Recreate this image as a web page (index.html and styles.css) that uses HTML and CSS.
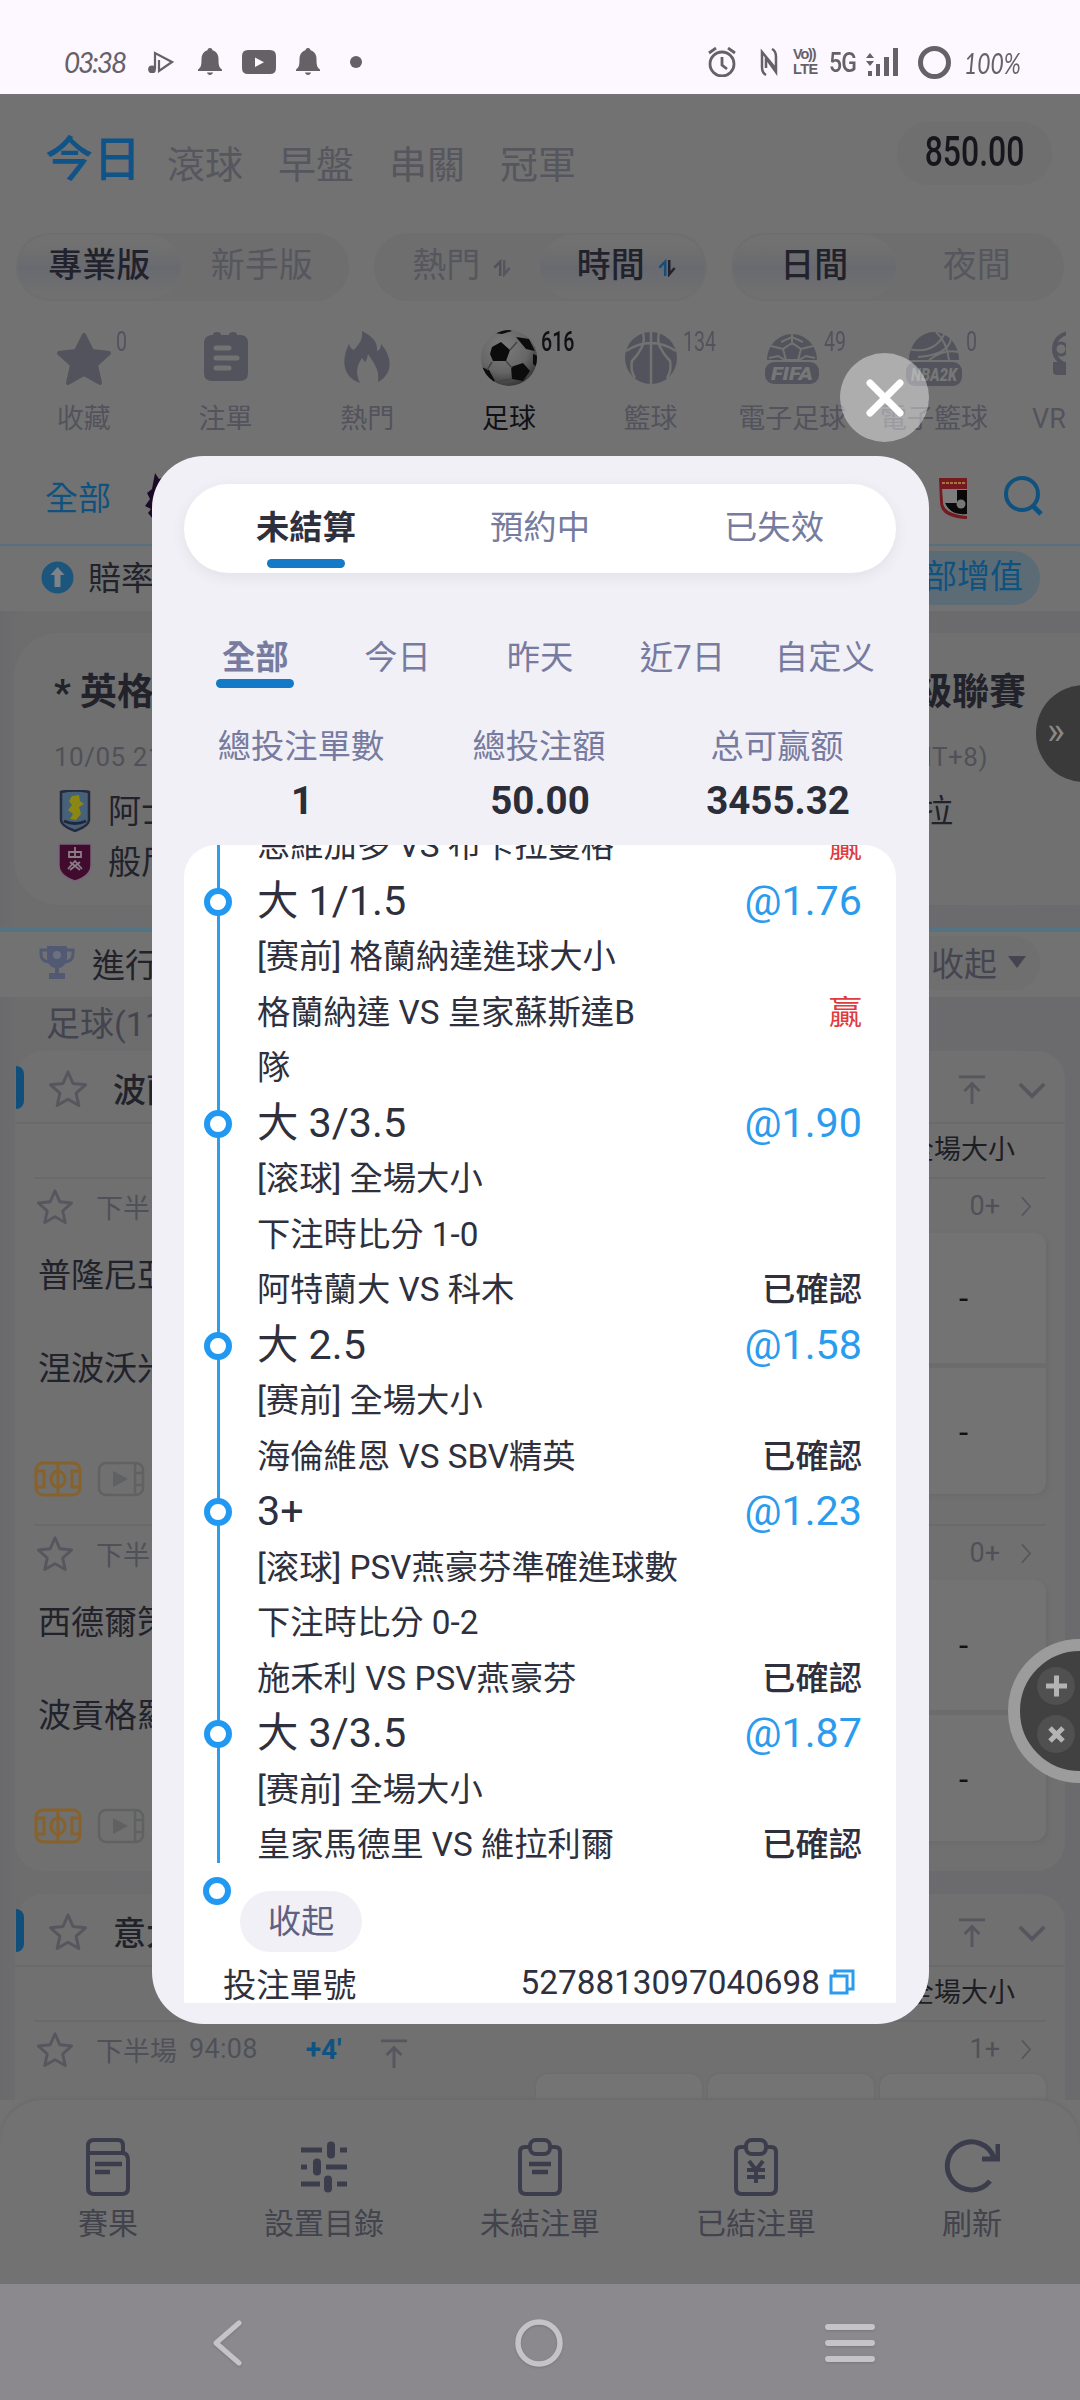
FILE: index.html
```html
<!DOCTYPE html>
<html lang="zh-Hant">
<head>
<meta charset="utf-8">
<title>未結注單</title>
<link rel="stylesheet" href="styles.css">
</head>
<body>
<svg class="defs" width="0" height="0" aria-hidden="true">
  <symbol id="bell" viewBox="0 0 24 28"><path d="M12 0c1.7 0 2.4 1 2.5 2.3C18.500 3.500 20.500 7 20.500 11c0 6 .5 8.500 3.500 10.500V23H0v-1.500C3 19.500 3.500 17 3.500 11c0-4 2-7.500 6-8.700C9.600 1 10.300 0 12 0zM9 24.500h6c-.5 3.300-5.500 3.300-6 0z" fill="currentColor"/></symbol>
  <symbol id="star" viewBox="0 0 44 40"><path d="M22 4l5 11.500 12.500 1.300-9.400 8.400 2.700 12.300L22 31.200l-10.800 6.300 2.700-12.300-9.400-8.400L17 15.500z" fill="none" stroke="currentColor" stroke-width="3" stroke-linejoin="round"/></symbol>
  <symbol id="totop" viewBox="0 0 30 34"><path d="M1 3h28M15 32V10M7 18l8-8 8 8" fill="none" stroke="currentColor" stroke-width="3"/></symbol>
  <symbol id="chev" viewBox="0 0 30 18"><path d="M2 2l13 13L28 2" fill="none" stroke="currentColor" stroke-width="4"/></symbol>
  <symbol id="more" viewBox="0 0 12 22"><path d="M1 1l9 10-9 10" fill="none" stroke="currentColor" stroke-width="1.800"/></symbol>
  <symbol id="sort" viewBox="0 0 20 20"><path d="M1.500 9.500L8 3v16" fill="none" stroke="var(--up)" stroke-width="2.800"/><path d="M12.500 1v16l6-7" fill="none" stroke="currentColor" stroke-width="2.800"/></symbol>
  <symbol id="pitch" viewBox="0 0 48 36"><g fill="none" stroke="currentColor" stroke-width="3"><rect x="2" y="2" width="44" height="32" rx="7"/><path d="M24 2v32M2 10h8v16H2M46 10h-8v16h8"/><ellipse cx="24" cy="18" rx="7" ry="8"/></g></symbol>
  <symbol id="video" viewBox="0 0 48 36"><g fill="none" stroke="currentColor" stroke-width="2.500"><rect x="2" y="2" width="44" height="32" rx="7"/><path d="M38 3v30M38 12h7M38 24h7"/></g><path d="M16 10l15 8-15 8z" fill="currentColor"/></symbol>
  <symbol id="clip" viewBox="0 0 46 58"><g fill="none" stroke="currentColor" stroke-width="4"><path d="M12 9H8q-5 0-5 5v36q0 6 6 6h28q6 0 6-6V14q0-5-5-5h-4"/><rect x="13" y="2" width="20" height="14" rx="6"/></g></symbol>
</svg>

<div class="phone">
  <header class="status">
    <span class="hand clock">03:38</span>
    <svg width="26" height="22" viewBox="0 0 26 22" fill="none" stroke="currentColor" stroke-width="2.200"><path d="M7 18V2l17 9-13 9V9"/><circle cx="4" cy="18.500" r="2.800" fill="currentColor"/></svg>
    <svg width="24" height="28"><use href="#bell"/></svg>
    <svg width="34" height="24" viewBox="0 0 34 24"><path d="M6 0h22q6 0 6 6v12q0 6-6 6H6q-6 0-6-6V6q0-6 6-6zM13 7.500v9.500l9-4.700z" fill="currentColor" fill-rule="evenodd"/></svg>
    <svg width="24" height="28"><use href="#bell"/></svg>
    <i class="dot"></i>
    <svg class="alarm" width="28" height="30" viewBox="0 0 28 30" fill="none" stroke="currentColor" stroke-width="2.800"><circle cx="14" cy="17" r="12"/><path d="M14 10v8l5 4M1 6l7-5M27 6l-7-5"/></svg>
    <svg class="nfc" width="18" height="28" viewBox="0 0 18 28" fill="none" stroke="currentColor" stroke-width="2.500"><path d="M6 27q-4-2-4-8V4l14 17M12 1q4 2 4 8v15L6 10v10"/></svg>
    <span class="volte"><b>Vo))</b><b class="lte">LTE</b></span>
    <span class="net">5G</span>
    <svg class="signal" width="32" height="28" viewBox="0 0 32 28" fill="currentColor"><path d="M0 10l4-5 4 5zM0 13h8l-4 5zM2 23h4v5H2zM10 16h4v12h-4zM18 9h5v19h-5zM27 0h5v28h-5z"/></svg>
    <i class="ring"></i>
    <span class="hand pct">100%</span>
  </header>

  <main class="app">
    <nav class="top">
      <b>今日</b><span>滾球</span><span>早盤</span><span>串關</span><span>冠軍</span>
      <div class="balance"><em>850.00</em></div>
    </nav>
    <div class="segs">
      <div class="seg"><span class="on">專業版</span><span>新手版</span></div>
      <div class="seg sorts"><span>熱門<svg width="18" height="18"><use href="#sort"/></svg></span><span class="on">時間<svg class="blue-up" width="18" height="18"><use href="#sort"/></svg></span></div>
      <div class="seg"><span class="on">日間</span><span>夜間</span></div>
    </div>
    <div class="sports">
      <div class="sport"><svg width="56" height="60" viewBox="0 0 56 60"><path d="M28 6l8 16 17 2-13 12 4 18-16-9-16 9 4-18L3 24l17-2z" fill="currentColor" stroke="currentColor" stroke-width="4" stroke-linejoin="round"/></svg><sup>0</sup><span>收藏</span></div>
      <div class="sport"><svg width="56" height="60" viewBox="0 0 56 60"><path d="M13 6h2q0-3 4-3t4 3h8q0-3 4-3t4 3h3q8 0 8 8v30q0 8-8 8H14q-8 0-8-8V14q0-7 7-8z" fill="currentColor"/><path d="M18 19h13M18 29h21M18 39h13" stroke="#727272" stroke-width="5" stroke-linecap="round"/></svg><span>注單</span></div>
      <div class="sport"><svg width="56" height="60" viewBox="0 0 56 60"><path d="M23 2c10 5 16 11 15 20 3-1 4-4 4-7 10 11 14 29-3 38 2-13-5-20-10-28-1 4-1 6-3 8l-3-4c-5 7-7 15-2 25C2 47 3 29 10 15c1 3 2 5 5 6 5-6 9-10 8-19z" fill="currentColor"/></svg><span>熱門</span></div>
      <div class="sport active"><svg width="58" height="60" viewBox="0 0 58 60"><defs><radialGradient id="ball" cx=".4" cy=".3" r=".75"><stop offset="0" stop-color="#7c7c7c"/><stop offset=".6" stop-color="#666"/><stop offset="1" stop-color="#333"/></radialGradient><clipPath id="bc"><circle cx="29" cy="29" r="28"/></clipPath></defs><circle cx="29" cy="29" r="28" fill="url(#ball)"/><g clip-path="url(#bc)"><path d="M12 18l9-5 9 8-4 11H13l-3-7zM36 8l13 2 6 12-9-2zM31 38l12-4 7 8-7 10-11-2zM1 38l8 3 6 11-6 4zM14 4l14-4 4 2-10 3zM53 25l5 2v12l-5-4z" fill="#0c0c0c"/><path d="M30 21l7-8M26 32l6 7M12 33l-5 8M32 50l-16 3" stroke="#444" stroke-width="1.500"/></g></svg><sup>616</sup><span>足球</span></div>
      <div class="sport"><svg width="56" height="60" viewBox="0 0 56 60"><circle cx="28" cy="29" r="26" fill="currentColor"/><path d="M28 3v52M3 22q25-16 50 0M20 4q2 7-1 14-4 8-10 14-2 9 3 17M36 4q-2 7 1 14 4 8 10 14 2 9-3 17" fill="none" stroke="#727272" stroke-width="2.500"/></svg><sup>134</sup><span>籃球</span></div>
      <div class="sport"><svg width="56" height="60" viewBox="0 0 56 60"><path d="M3 31a25 26 0 0150 0z" fill="currentColor"/><path d="M17 13l11-5 11 5M28 14l-9 6 3 11h12l3-11zM19 20L7 17M37 20l12-3M21 31l-7-4-9 2M35 31l7-4 9 2M28 3v11" fill="none" stroke="#727272" stroke-width="2"/><rect x="1" y="33" width="54" height="22" rx="9" fill="currentColor"/><text x="28" y="51" class="badge" textLength="42" lengthAdjust="spacingAndGlyphs">FIFA</text></svg><sup>49</sup><span>電子足球</span></div>
      <div class="sport"><svg width="56" height="60" viewBox="0 0 56 60"><path d="M3 31a25 28 0 0150 0z" fill="currentColor"/><path d="M3 20q25 6 36-16M12 28q30-2 33-18M30 3q11 10 13 28M23 31q15-11 29-8" fill="none" stroke="#727272" stroke-width="2"/><rect x="0" y="33" width="56" height="24" rx="9" fill="currentColor"/><text x="28" y="52" class="badge" textLength="46" lengthAdjust="spacingAndGlyphs">NBA2K</text></svg><sup>0</sup><span>電子籃球</span></div>
      <div class="sport vr"><svg width="14" height="60" viewBox="0 0 14 60"><circle cx="18" cy="20" r="16" fill="none" stroke="currentColor" stroke-width="4"/><circle cx="9" cy="20" r="6" fill="none" stroke="currentColor" stroke-width="3"/><path d="M1 33h13v13H5q-4 0-4-4z" fill="currentColor"/></svg><span>VR</span></div>
    </div>
    <div class="leagues">
      <span>全部</span>
      <svg class="lion" width="34" height="46" viewBox="0 0 34 46"><path d="M10 0l4 6 8-3 12 10v33H8l-5-6 3-4-6-3 5-7-3-6 5-4z" fill="#1d0a26"/></svg>
      <svg class="jl" width="28" height="42" viewBox="0 0 28 42"><path d="M0 0h28v41Q1 40 1 24z" fill="#741a20"/><path d="M3 11h25v27Q4 36 4 24z" fill="#7d7d7d"/><path d="M18 12h10v24Q12 38 6 25h12z" fill="#090909"/><circle cx="22" cy="26" r="4.500" fill="#777"/><path d="M3 5h24" stroke="#a5793c" stroke-width="2" stroke-dasharray="3 1"/></svg>
      <svg class="search" width="40" height="40" viewBox="0 0 40 40"><circle cx="18" cy="18" r="16" fill="none" stroke="#0f527f" stroke-width="4"/><path d="M28 29l9 9" stroke="#0f527f" stroke-width="5"/></svg>
    </div>
    <div class="boost">
      <svg width="33" height="33" viewBox="0 0 33 33"><circle cx="16.500" cy="16.500" r="16" fill="#1c567c"/><path d="M16.500 6l7 8h-4v12h-6V14h-4z" fill="#7d8386"/></svg>
      <span>賠率</span><div class="boost-btn">全部增值</div>
    </div>

    <div class="grey">
      <section class="feature">
        <div class="feature-title"><b>* 英格</b><b>級聯賽</b></div>
        <div class="feature-date"><span>10/05 21</span><span>(GMT+8)</span></div>
        <div class="feature-team"><svg width="34" height="42" viewBox="0 0 34 42"><path d="M3 2q14-3 28 0v28q0 6-14 11Q3 36 3 30z" fill="#476178" stroke="#252b3c" stroke-width="2.500"/><path d="M14 6l7-1 1 6 4 3-5 3 2 7-5 6-6-1 3-5-5-4 4-5-3-4z" fill="#8b8710"/><path d="M6 31q11 5 22 0" stroke="#20283d" stroke-width="3" fill="none"/></svg><span>阿士</span><span class="end">拉</span></div>
        <div class="feature-team"><svg width="34" height="40" viewBox="0 0 34 40"><path d="M1 2h32v21q0 11-16 16Q1 34 1 23z" fill="#400b2c" stroke="#79637a" stroke-width="1.500"/><path d="M11 10h12v5H11zM17 5v10M10 27l7-8 7 8M12 20l10 8M22 20l-10 8" fill="none" stroke="#887f86" stroke-width="1.800"/></svg><span>般尼</span></div>
      </section>
    </div>
    <div class="live">
      <svg width="36" height="36" viewBox="0 0 36 36"><path d="M8 1h20v11q0 9-8 11v5h6v6H10v-6h6v-5q-8-2-8-11z" fill="#525973"/><path d="M8 5H2v4q0 7 8 8M28 5h6v4q0 7-8 8" fill="none" stroke="#525973" stroke-width="3"/><circle cx="18" cy="10" r="4" fill="#6c7180"/></svg>
      <span>進行</span><div class="fold">收起<i></i></div>
    </div>
    <div class="grey matches">
      <h2>足球(11</h2>
      <section class="card">
        <div class="card-head"><i class="tab"></i><svg width="44" height="40"><use href="#star"/></svg><b>波蘭</b><svg class="push" width="28" height="32"><use href="#totop"/></svg><svg class="down" width="28" height="17"><use href="#chev"/></svg></div>
        <div class="cols">全場大小</div>
        <article class="match">
          <div class="match-head"><svg width="42" height="38"><use href="#star"/></svg><span>下半</span><em>0+</em><svg class="more" width="11" height="21"><use href="#more"/></svg></div>
          <div class="match-body"><div class="teams"><span>普隆尼亞</span><span>涅波沃米</span><div class="media"><svg class="gold" width="48" height="36"><use href="#pitch"/></svg><svg width="48" height="36"><use href="#video"/></svg></div></div><div class="odds"><div>-</div><div>-</div></div></div>
        </article>
        <article class="match">
          <div class="match-head"><svg width="42" height="38"><use href="#star"/></svg><span>下半</span><em>0+</em><svg class="more" width="11" height="21"><use href="#more"/></svg></div>
          <div class="match-body"><div class="teams"><span>西德爾策</span><span>波貢格羅</span><div class="media"><svg class="gold" width="48" height="36"><use href="#pitch"/></svg><svg width="48" height="36"><use href="#video"/></svg></div></div><div class="odds"><div>-</div><div>-</div></div></div>
        </article>
      </section>
      <section class="card second">
        <div class="card-head"><i class="tab"></i><svg width="44" height="40"><use href="#star"/></svg><b>意大</b><svg class="push" width="28" height="32"><use href="#totop"/></svg><svg class="down" width="28" height="17"><use href="#chev"/></svg></div>
        <div class="cols">全場大小</div>
        <article class="match">
          <div class="match-head"><svg width="42" height="38"><use href="#star"/></svg><span>下半場</span><span class="time">94:08</span><strong>+4'</strong><svg class="top-in" width="28" height="32"><use href="#totop"/></svg><em>1+</em><svg class="more" width="11" height="21"><use href="#more"/></svg></div>
          <div class="cells"><i></i><i></i><i></i></div>
        </article>
      </section>
    </div>
  </main>

  <footer class="dock">
    <div><svg width="46" height="58" viewBox="0 0 46 58" fill="none" stroke="currentColor" stroke-width="4"><path d="M3 15V8q0-6 6-6h24q5 0 5 6v7M3 15h34q6 0 6 7v28q0 6-6 6H9q-6 0-6-6z"/><path d="M10 26h27M10 34h15" stroke-width="4.500"/></svg><span>賽果</span></div>
    <div><svg width="46" height="58" viewBox="0 0 46 58" fill="none" stroke="currentColor" stroke-width="5"><path d="M0 12h21M39 12h7M0 29h6M25 29h21M0 46h19M36 46h10"/><path d="M30 7.500v9M16 24.500v9M27 41.500v9" stroke-width="8" stroke-linecap="round"/></svg><span>設置目錄</span></div>
    <div><svg width="46" height="58" viewBox="0 0 46 58"><use href="#clip" width="46" height="58"/><path d="M12 26h22M15 34h16" stroke="currentColor" stroke-width="4.500"/></svg><span>未結注單</span></div>
    <div><svg width="46" height="58" viewBox="0 0 46 58"><use href="#clip" width="46" height="58"/><path d="M16 23l7 9 7-9M14 32h18M14 39h18M23 31v14" fill="none" stroke="currentColor" stroke-width="4"/></svg><span>已結注單</span></div>
    <div><svg width="56" height="58" viewBox="0 0 56 58" fill="none" stroke="currentColor" stroke-width="5"><path d="M46 43A24 24 0 1 1 50 20M54 6v15H38"/></svg><span>刷新</span></div>
  </footer>

  <footer class="sysnav">
    <svg width="32" height="46" viewBox="0 0 32 46" fill="none" stroke="currentColor" stroke-width="5" stroke-linecap="round" stroke-linejoin="round"><path d="M28 3L5 23l23 20"/></svg>
    <svg class="home" width="48" height="48" viewBox="0 0 48 48" fill="none" stroke="currentColor" stroke-width="5.500"><circle cx="24" cy="24" r="21"/></svg>
    <svg width="50" height="38" viewBox="0 0 50 38" stroke="currentColor" stroke-width="6" stroke-linecap="round"><path d="M3 3h44M3 19h44M3 35h44"/></svg>
  </footer>

  <div class="handle">»</div>
  <svg class="fab" width="73" height="146" viewBox="0 0 73 146"><circle cx="73" cy="73" r="66" fill="#414141" stroke="#9c9c9c" stroke-width="12"/><circle cx="49" cy="48" r="19" fill="#505050"/><circle cx="49" cy="96" r="19" fill="#505050"/><path d="M39 48h21M49.500 37.500v21M43 90l13 13M56 90l-13 13" stroke="#b3b3b3" stroke-width="5"/></svg>

  <button class="close"><svg width="40" height="40" viewBox="0 0 40 40"><path d="M5 5l30 30M35 5L5 35" stroke="#fff" stroke-width="7" stroke-linecap="round"/></svg></button>
  <section class="dialog">
    <nav class="tabs"><span class="on">未結算</span><span>預約中</span><span>已失效</span></nav>
    <nav class="range"><span class="on">全部</span><span>今日</span><span>昨天</span><span>近7日</span><span>自定义</span></nav>
    <dl class="stats">
      <div><dt>總投注單數</dt><dd>1</dd></div><div><dt>總投注額</dt><dd>50.00</dd></div><div><dt>总可赢额</dt><dd>3455.32</dd></div>
    </dl>
    <div class="list">
      <div class="legs">
        <div class="leg first"><div class="row"><span class="vs">恩維加多 VS 布卡拉曼格</span><em class="win">贏</em></div></div>
        <div class="leg"><h3>大 1/1.5<b>@1.76</b></h3><p>[赛前] 格蘭納達進球大小</p><div class="row"><span class="vs">格蘭納達 VS 皇家蘇斯達B隊</span><em class="win">贏</em></div></div>
        <div class="leg"><h3>大 3/3.5<b>@1.90</b></h3><p>[滚球] 全場大小</p><p>下注時比分 1-0</p><div class="row"><span class="vs">阿特蘭大 VS 科木</span><em>已確認</em></div></div>
        <div class="leg"><h3>大 2.5<b>@1.58</b></h3><p>[赛前] 全場大小</p><div class="row"><span class="vs">海倫維恩 VS SBV精英</span><em>已確認</em></div></div>
        <div class="leg"><h3>3+<b>@1.23</b></h3><p>[滚球] PSV燕豪芬準確進球數</p><p>下注時比分 0-2</p><div class="row"><span class="vs">施禾利 VS PSV燕豪芬</span><em>已確認</em></div></div>
        <div class="leg last"><h3>大 3/3.5<b>@1.87</b></h3><p>[赛前] 全場大小</p><div class="row"><span class="vs">皇家馬德里 VS 維拉利爾</span><em>已確認</em></div></div>
      </div>
      <div class="end-row"><i></i><button>收起</button></div>
      <div class="bet-id"><span>投注單號</span><span class="num">5278813097040698</span><svg width="26" height="26" viewBox="0 0 26 26" fill="none" stroke="#2b9bee" stroke-width="3"><path d="M2 7h16v17H2z"/><path d="M6 6V2h18v18h-5" /></svg></div>
    </div>
  </section>
</div>
</body>
</html>
```
FILE: styles.css
```css
*, *::before, *::after { box-sizing: border-box; }
body { margin: 0; font-family: Roboto, "Noto Sans CJK TC", sans-serif; }
.defs { position: absolute; }
svg { display: block; flex: none; }
i, em { font-style: normal; }
button { border: 0; padding: 0; font: inherit; }
h2, h3, p, dl, dd { margin: 0; font-weight: 400; }
.phone { position: relative; width: 1080px; height: 2400px; overflow: hidden; background: #727272; white-space: nowrap; display: flex; flex-direction: column; }

.status { height: 94px; flex: none; background: #fdf7ff; color: #656167; display: flex; align-items: center; padding: 30px 64px 0; }
.hand { font-family: Lato, sans-serif; font-weight: 400; font-style: italic; font-size: 29px; }
.clock { width: 60px; margin-right: 24px; letter-spacing: -2.200px; font-size: 28px; }
.status svg { margin-right: 24px; }
.status svg:nth-of-type(2), .status svg:nth-of-type(3) { margin-right: 20px; }
.status .dot { width: 12px; height: 12px; border-radius: 50%; background: currentColor; margin-left: 6px; }
.status .alarm { margin-left: auto; margin-right: 24px; }
.status .nfc { margin-right: 15px; }
.volte { display: flex; flex-direction: column; gap: 0; font-family: "Liberation Sans", sans-serif; font-size: 14.500px; line-height: 17px; width: 28px; margin-right: 8px; }
.volte b { letter-spacing: -1.200px; }
.volte .lte { letter-spacing: -.6px; margin-top: -2px; }
.net { font-size: 28px; font-weight: 500; letter-spacing: -1px; width: 28px; margin-right: 9px; display: inline-block; transform: scaleX(.82); transform-origin: left; }
.status .signal { margin-right: 20px; }
.ring { width: 33px; height: 33px; border: 5px solid; border-radius: 50%; margin-right: 13px; }
.pct { width: 52px; font-size: 29px; transform: scaleX(.79); transform-origin: left; }

.app { height: 2006px; flex: none; overflow: hidden; color: #22222b; }
.top { height: 139px; display: flex; align-items: center; padding: 0 28px 4px 45px; font-size: 38px; color: #56565f; gap: 36px; }
.top b { font-size: 48px; font-weight: 500; color: #105386; margin-right: -10px; margin-top: -14px; }
.top > span { margin-right: -1px; }
.balance { margin-left: auto; margin-top: -16px; width: 155px; height: 63px; border-radius: 32px; background: #6f6f6f; color: #16161c; display: flex; align-items: center; justify-content: center; padding-bottom: 4px; }
.balance em { font-size: 42px; font-weight: 500; transform: scaleX(.76); }
.segs { display: flex; justify-content: space-between; padding: 0 16px; }
.seg { display: flex; width: 333px; height: 68px; border-radius: 34px; padding: 2px; background: #6e6e6e; font-size: 34px; color: #56565e; }
.seg span { flex: 1; display: flex; align-items: center; justify-content: center; border-radius: 32px; padding-bottom: 10px; --up: #515159; }
.seg .on { font-weight: 500; color: #22222c; background: linear-gradient(#717171 15%, #696a70 52%, #707071 90%); }
.seg span:last-child:not(.on) { padding-right: 4px; }
.seg svg { margin: 12px 0 0 13px; }
.sorts span { padding-left: 8px; }
.seg .blue-up { --up: #124f80; }

.sports { height: 147px; display: flex; padding: 28px 14px 0 13px; overflow: hidden; color: #53535d; }
.sport { position: relative; width: 141.700px; flex: none; display: flex; flex-direction: column; align-items: center; font-size: 27px; }
.sport > span { margin-top: 11px; line-height: 38px; }
.sport sup { position: absolute; left: 103px; top: -1px; line-height: 28px; font-size: 28px; transform: scaleX(.7); transform-origin: left; }
.sport.active sup { font-weight: 500; }
.sport.active { color: #101015; }
.sport.vr { width: 61px; align-items: flex-end; }
.badge { font: italic 900 18px Roboto, sans-serif; fill: #777; text-anchor: middle; }
.leagues { height: 98px; display: flex; align-items: center; padding: 0 36px 0 45px; font-size: 33px; color: #0f527f; border-bottom: 2px solid #557180; }
.lion { margin-left: 34px; }
.jl { margin-left: auto; margin-right: 37px; margin-top: 5px; }
.boost { height: 65px; display: flex; align-items: center; padding: 0 40px 2px 41px; font-size: 33px; }
.boost span { margin-left: 14px; margin-top: -3px; }
.boost-btn { margin-left: auto; height: 54px; line-height: 52px; border-radius: 27px; padding: 0 17px; color: #0f527f; background: #5c6c76; }

.grey { background: linear-gradient(90deg, #6a6a6c, #6d6d6e 20px, #6b6b6d); }
.grey:has(.feature) { height: 316px; padding-top: 22px; }
.feature { margin-left: 14px; height: 272px; border-radius: 44px 0 0 44px; background: #707070; padding: 36px 54px 0 40px; }
.feature-title { display: flex; justify-content: space-between; font-size: 37px; line-height: 48px; }
.feature-title b { font-weight: 700; }
.feature-date { display: flex; justify-content: space-between; font-size: 26px; letter-spacing: .5px; line-height: 34px; margin: 23px 38px 11px 0; color: #505059; }
.feature-team { display: flex; align-items: center; height: 51px; font-size: 33px; padding: 0 73px 0 4px; gap: 16px; }
.feature-team span { margin-top: -3px; }
.feature-team .end { margin-left: auto; }
.live { height: 70px; border-top: 5px solid #557483; display: flex; align-items: center; padding: 0 40px 3px 39px; font-size: 33px; }
.live > span { margin-left: 17px; }
.fold { margin-left: auto; display: flex; align-items: center; height: 54px; padding: 0 14px 2px 30px; border-radius: 27px; background: #6f6f70; color: #45454f; gap: 11px; }
.fold i { border: 9px solid transparent; border-top: 12px solid #45454f; border-bottom: 0; }
.matches h2 { height: 54px; line-height: 54px; padding-left: 46px; font-size: 34px; color: #44444f; }
.card { margin: 0 15px; height: 820px; border-radius: 28px; background: #707070; }
.card.second { margin-top: 23px; }
.card-head { height: 73px; display: flex; align-items: center; padding-right: 19px; border-bottom: 2px solid #6a6a6b; padding-top: 2px; }
.tab { width: 8px; height: 43px; border-radius: 0 9px 9px 0; background: #104f7b; margin-right: 22px; margin-left: 1px; }
.card-head svg, .match-head svg { color: #56565e; }
.card-head b { font-size: 33px; font-weight: 500; margin-left: 23px; }
.card-head .push { margin-left: auto; margin-right: 32px; margin-top: 4px; }
.card-head .down { margin-top: 6px; }
.cols { height: 53px; line-height: 53px; text-align: right; padding-right: 50px; font-size: 27px; color: #1d1d24; }
.match { margin: 0 19px; height: 347px; border-top: 2px solid #6a6a6b; }
.match-head { height: 54px; display: flex; align-items: center; font-size: 27px; color: #505059; }
.match-head > span { margin-left: 20px; }
.match-head em { margin-left: auto; }
.match-head .more { margin: 0 14px 0 21px; }
.match-head .time { margin-left: 12px; letter-spacing: .3px; }
.match-head strong { color: #0f5382; margin-left: 48px; font-size: 28px; }
.match-head .top-in { margin: 10px 0 0 38px; }
.match-body { display: flex; justify-content: space-between; }
.teams { padding: 18px 0 0 4px; font-size: 33px; }
.teams span { display: block; height: 93px; line-height: 50px; }
.media { display: flex; gap: 15px; color: #606162; margin: 24px 0 0 -4px; }
.gold { color: #88622b; }
.odds { width: 165px; height: 261px; background: #737373; border-radius: 12px; color: #111; font-size: 33px; text-align: center; box-shadow: 2px 2px 4px #6a6a6a; }
.odds div { height: 130px; line-height: 132px; }
.odds div + div { border-top: 5px solid #6c6c6d; height: 131px; line-height: 130px; }
.cells { display: flex; justify-content: flex-end; gap: 6px; margin-top: -2px; }
.cells i { width: 166px; height: 60px; border-radius: 12px; background: #747474; box-shadow: 0 0 3px #686868; }

.dock { height: 184px; flex: none; background: #727272; border-radius: 42px 42px 0 0; display: grid; grid-template-columns: repeat(5, 1fr); padding-top: 38px; font-size: 30px; color: #3b3d4d; box-shadow: 0 -2px 3px #6b6b6b; z-index: 1; }
.dock div { display: flex; flex-direction: column; align-items: center; }
.dock span { line-height: 44px; margin-top: 6px; color: #42434d; }
.sysnav { height: 116px; flex: none; background: #8b898e; color: #c5c3c8; display: flex; align-items: center; padding: 1px 205px 0 211px; justify-content: space-between; z-index: 1; }
.sysnav svg { filter: drop-shadow(0 1px 1px #777); }
.home { margin-left: 10px; }

.handle { position: absolute; left: 1036px; top: 685px; width: 60px; height: 97px; border-radius: 48px 0 0 48px; background: #3a3a3a; color: #888; font-size: 38px; line-height: 92px; padding-left: 11px; }
.fab { position: absolute; left: 1007px; top: 1638px; }
.close { position: absolute; left: 840px; top: 353px; width: 89px; height: 89px; border-radius: 50%; background: rgba(255,255,255,.42); display: grid; place-items: center; }
.dialog { position: absolute; left: 152px; top: 456px; width: 777px; height: 1568px; border-radius: 52px; background: #f1f0f6; padding: 28px 33px 0 32px; color: #2e303d; font-size: 33.300px; }
.tabs { height: 89px; border-radius: 45px; background: #fff; display: grid; grid-template-columns: repeat(3, 234px); justify-content: center; text-align: center; line-height: 87px; color: #777b9f; box-shadow: 0 4px 14px rgba(60,60,90,.08); }
.tabs .on, .range .on { position: relative; font-weight: 700; }
.tabs .on { color: #2e303d; }
.tabs .on::after, .range .on::after { content: ""; position: absolute; left: 50%; margin-left: -39px; width: 78px; height: 9px; border-radius: 5px; background: #147ac7; top: 75px; }
.range { margin-top: 59px; height: 82px; line-height: 52px; display: grid; grid-template-columns: repeat(5, 1fr); text-align: center; color: #777b9f; }
.range .on::after { top: 47px; }
.stats { display: grid; grid-template-columns: repeat(3, 238px); justify-content: center; text-align: center; height: 131px; padding-top: 9px; }
.stats dt { line-height: 48px; color: #777b9f; margin-left: -2px; }
.stats dd { font-size: 38.500px; font-weight: 700; line-height: 59px; color: #2b2d39; }
.list { height: 1158px; background: #fff; border-radius: 32px 32px 0 0; overflow: hidden; }
.legs { margin: -27px 0 0 33px; border-left: 3px solid #2b9fee; height: 1045px; padding: 0 34px 0 37px; line-height: 55.500px; }
.leg h3 { position: relative; font-size: 41.300px; line-height: 55.500px; display: flex; justify-content: space-between; }
.leg h3 b { font-weight: 400; color: #2b9bee; }
.leg h3::before, .end-row i { content: ""; width: 28px; height: 28px; border: 6px solid #2199f2; border-radius: 50%; background: #fff; }
.leg h3::before { position: absolute; left: -53px; top: 14px; }
.row { display: flex; justify-content: space-between; }
.vs { width: 400px; white-space: normal; }
.row em { font-weight: 500; }
.row .win { color: #df3a3d; font-weight: 400; }
.end-row { display: flex; padding: 14px 0 0 19px; height: 89px; gap: 9px; }
.end-row button { width: 122px; height: 61px; border-radius: 31px; background: #f1f0f6; color: #5e6182; line-height: 56px; margin-top: 14px; }
.bet-id { display: flex; align-items: center; padding: 2px 41px 0 39px; height: 58px; }
.num { margin-left: auto; margin-right: 9px; }
```
